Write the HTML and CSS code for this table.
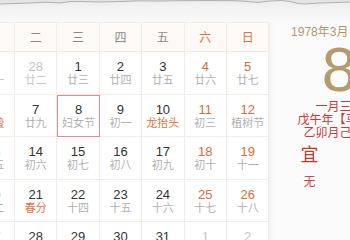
FILE: index.html
```html
<!DOCTYPE html>
<html lang="zh">
<head>
<meta charset="utf-8">
<link rel="stylesheet" href="styles.css">
</head>
<body>
<div class="page">
  <div class="tear">
    <svg class="tear-svg" width="350" height="8" viewBox="0 0 350 8">
      <path d="M0 0 H350 V2 L338 2.5 L320 3 L305 4 L298 3.5 L290 1.5 L282 0.5 L270 1 L258 2.5 L248 1.5 L235 0.7 L210 0.5 L180 0.7 L160 1 L140 0.8 L120 1.5 L100 2 L80 1.5 L70 1.5 L60 3 L45 2.2 L30 3 L15 3.5 L0 4 Z" fill="#e4e4e4"/>
      <polyline points="350,2 338,2.5 320,3 305,4 298,3.5 290,1.5 282,0.5 270,1 258,2.5 248,1.5 235,0.7 210,0.5 180,0.7 160,1 140,0.8 120,1.5 100,2 80,1.5 70,1.5 60,3 45,2.2 30,3 15,3.5 0,4" fill="none" stroke="#a9a9a9" stroke-width="0.9"/>
    </svg>
  </div>
  <div class="main">
    <div class="cal">
      <div class="grid">
        <div class="head">一</div>
        <div class="head">二</div>
        <div class="head">三</div>
        <div class="head">四</div>
        <div class="head">五</div>
        <div class="head wk">六</div>
        <div class="head wk">日</div>

        <div class="cell other"><span class="num">27</span><span class="lunar">廿一</span></div>
        <div class="cell other"><span class="num">28</span><span class="lunar">廿二</span></div>
        <div class="cell"><span class="num">1</span><span class="lunar">廿三</span></div>
        <div class="cell"><span class="num">2</span><span class="lunar">廿四</span></div>
        <div class="cell"><span class="num">3</span><span class="lunar">廿五</span></div>
        <div class="cell wk"><span class="num">4</span><span class="lunar">廿六</span></div>
        <div class="cell wk"><span class="num">5</span><span class="lunar">廿七</span></div>

        <div class="cell"><span class="num">6</span><span class="lunar fest">惊蛰</span></div>
        <div class="cell"><span class="num">7</span><span class="lunar">廿九</span></div>
        <div class="cell sel"><span class="num">8</span><span class="lunar">妇女节</span></div>
        <div class="cell"><span class="num">9</span><span class="lunar">初一</span></div>
        <div class="cell"><span class="num">10</span><span class="lunar fest">龙抬头</span></div>
        <div class="cell wk"><span class="num">11</span><span class="lunar">初三</span></div>
        <div class="cell wk"><span class="num">12</span><span class="lunar">植树节</span></div>

        <div class="cell"><span class="num">13</span><span class="lunar">初五</span></div>
        <div class="cell"><span class="num">14</span><span class="lunar">初六</span></div>
        <div class="cell"><span class="num">15</span><span class="lunar">初七</span></div>
        <div class="cell"><span class="num">16</span><span class="lunar">初八</span></div>
        <div class="cell"><span class="num">17</span><span class="lunar">初九</span></div>
        <div class="cell wk"><span class="num">18</span><span class="lunar">初十</span></div>
        <div class="cell wk"><span class="num">19</span><span class="lunar">十一</span></div>

        <div class="cell"><span class="num">20</span><span class="lunar">十二</span></div>
        <div class="cell"><span class="num">21</span><span class="lunar fest">春分</span></div>
        <div class="cell"><span class="num">22</span><span class="lunar">十四</span></div>
        <div class="cell"><span class="num">23</span><span class="lunar">十五</span></div>
        <div class="cell"><span class="num">24</span><span class="lunar">十六</span></div>
        <div class="cell wk"><span class="num">25</span><span class="lunar">十七</span></div>
        <div class="cell wk"><span class="num">26</span><span class="lunar">十八</span></div>

        <div class="cell"><span class="num">27</span><span class="lunar">十九</span></div>
        <div class="cell"><span class="num">28</span><span class="lunar">二十</span></div>
        <div class="cell"><span class="num">29</span><span class="lunar">廿一</span></div>
        <div class="cell"><span class="num">30</span><span class="lunar">廿二</span></div>
        <div class="cell"><span class="num">31</span><span class="lunar">廿三</span></div>
        <div class="cell other"><span class="num">1</span><span class="lunar">廿四</span></div>
        <div class="cell other"><span class="num">2</span><span class="lunar">廿五</span></div>
      </div>
    </div>
    <div class="panel">
      <div class="p-date">1978年3月 星期三</div>
      <div class="p-day">8</div>
      <div class="p-lunar">一月三十</div>
      <div class="p-lunar">戊午年【马年】</div>
      <div class="p-lunar">乙卯月己巳日</div>
      <div class="yiji">
        <div class="yj-col">
          <div class="yj-title">宜</div>
          <div class="yj-item">无</div>
        </div>
        <div class="yj-col">
          <div class="yj-title">忌</div>
          <div class="yj-item">无</div>
        </div>
      </div>
    </div>
  </div>
</div>
</body>
</html>
```
FILE: styles.css
```css
html, body {
  margin: 0;
  padding: 0;
}
body {
  width: 350px;
  height: 240px;
  overflow: hidden;
  background: #ffffff;
  font-family: "Liberation Sans", "Noto Sans CJK SC", sans-serif;
}
.page {
  width: 350px;
  height: 240px;
  overflow: hidden;
}
.tear {
  height: 22px;
  background: linear-gradient(#ececec, #f3f3f3 40%, #f9f9f9);
}
.tear-svg {
  display: block;
}
.main {
  display: flex;
  align-items: flex-start;
}
.cal {
  flex: none;
  width: 269.4px;
  background: #fff;
}
.grid {
  display: grid;
  grid-template-columns: repeat(7, 42.4px);
  margin-left: -27.4px;
  border-top: 1px solid #f3ebe5;
}
.head {
  box-sizing: border-box;
  height: 29px;
  line-height: 28px;
  text-align: center;
  font-family: "Noto Sans CJK SC", sans-serif;
  font-size: 12px;
  color: #8a8a8a;
  background: #fcf9f6;
  border-right: 1px solid #f3ebe5;
  border-bottom: 1px solid #f3ebe5;
}
.head.wk {
  color: #e0733e;
}
.cell {
  box-sizing: border-box;
  height: 42.5px;
  padding-top: 8px;
  display: flex;
  flex-direction: column;
  align-items: center;
  border-right: 1px solid #f3ebe5;
  border-bottom: 1px solid #f3ebe5;
  background: #fff;
}
.num {
  font-family: "Liberation Sans", sans-serif;
  font-size: 13px;
  line-height: 13px;
  color: #333;
}
.lunar {
  font-family: "Noto Sans CJK SC", sans-serif;
  font-size: 11px;
  line-height: 13px;
  color: #b0b0b0;
  white-space: nowrap;
}
.lunar.fest {
  color: #e0733e;
}
.cell.wk .num {
  color: #dc6a35;
}
.cell.other .num {
  color: #c4c4c4;
}
.cell.other .lunar {
  color: #c8c8c8;
}
.cell.sel {
  border: 1px solid #e58c8e;
  padding-top: 7px;
}
.panel {
  flex: none;
  box-sizing: border-box;
  width: 140px;
  height: 218px;
  padding: 0 10px;
  text-align: center;
  background: #fbfbfb;
  box-shadow: inset 6px 0 6px -5px rgba(0, 0, 0, 0.06);
}
.p-date {
  font-family: "Liberation Sans", "Noto Sans CJK SC", sans-serif;
  font-size: 12px;
  line-height: 14px;
  margin-top: 3px;
  color: #b09670;
  white-space: nowrap;
}
.p-day {
  font-family: "Liberation Sans", sans-serif;
  font-size: 63px;
  line-height: 60px;
  color: #b59b6b;
  margin-top: 0;
}
.p-lunar {
  font-family: "Noto Sans CJK SC", sans-serif;
  font-size: 12px;
  line-height: 13px;
  color: #c8393b;
  white-space: nowrap;
}
.yiji {
  display: flex;
  margin-top: 4px;
}
.yj-col {
  flex: 1;
  display: flex;
  flex-direction: column;
  align-items: center;
}
.yj-title {
  font-family: "Noto Sans CJK SC", sans-serif;
  font-size: 18px;
  line-height: 22px;
  color: #c0392b;
}
.yj-item {
  font-family: "Noto Sans CJK SC", sans-serif;
  font-size: 12px;
  line-height: 14px;
  margin-top: 10px;
  color: #c8494a;
}
```
